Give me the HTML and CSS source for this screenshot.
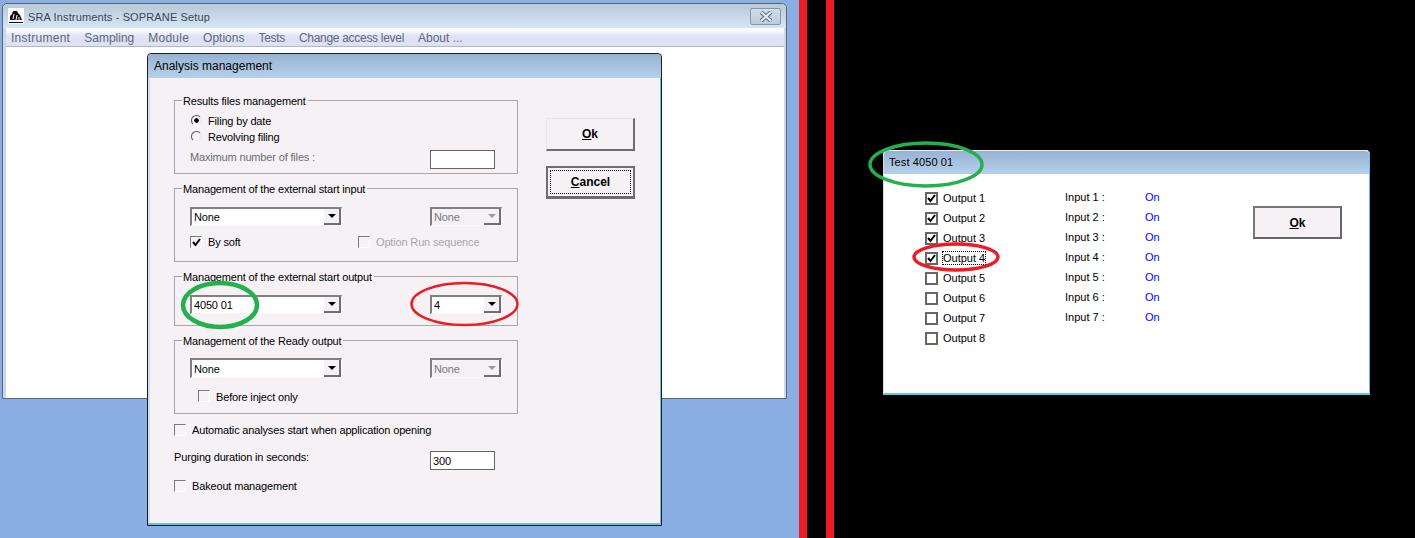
FILE: index.html
```html
<!DOCTYPE html>
<html lang="en">

<head>
    <meta charset="UTF-8">
    <meta name="viewport" content="width=device-width, initial-scale=1.0">
    <title>SOPRANE Setup</title>
    <link rel="stylesheet" href="styles.css">
</head>

<body>
    <div class="screen">
        <div class="left-pane">
            <!-- Main application window -->
            <div class="main-window">
                <div class="main-title">
                    <svg class="app-icon" width="16" height="16" viewBox="0 0 16 16">
                        <rect width="16" height="16" fill="#fff" />
                        <path d="M2 12 L2 8 L4 6 L5 3 L9 3 L10 5 L12 7 L14 12 Z" fill="#111" />
                        <path d="M5 11 L6 6 M8 12 L9 7 M11 12 L11 9" stroke="#fff" stroke-width="1" fill="none" />
                        <rect x="1" y="14" width="14" height="1" fill="#111" />
                    </svg>
                    <span class="main-title-text">SRA Instruments - SOPRANE Setup</span>
                    <div class="close-btn">
                        <svg width="14" height="11" viewBox="0 0 14 11">
                            <path d="M2 1 L12 10 M12 1 L2 10" stroke="#5d6a7a" stroke-width="4" fill="none" />
                            <path d="M2 1 L12 10 M12 1 L2 10" stroke="#e8eef4" stroke-width="2" fill="none" />
                        </svg>
                    </div>
                </div>
                <div class="menu-bar">
                    <span class="menu-wide">Instrument</span>
                    <span>Sampling</span>
                    <span class="menu-wide">Module</span>
                    <span>Options</span>
                    <span class="menu-tight">Tests</span>
                    <span class="menu-tight">Change access level</span>
                    <span>About ...</span>
                </div>
                <div class="main-content"></div>
            </div>

            <!-- Analysis management dialog -->
            <div class="dialog analysis-dialog">
                <div class="dialog-title">Analysis management</div>
                <div class="analysis-body">
                    <div class="analysis-form">
                        <fieldset class="group group-files">
                            <legend>Results files management</legend>
                            <div class="row-radio"><span class="radio radio-on"></span>Filing by date</div>
                            <div class="row-radio"><span class="radio"></span>Revolving filing</div>
                            <div class="row-max">
                                <span class="muted">Maximum number of files :</span>
                                <span class="text-box"></span>
                            </div>
                        </fieldset>

                        <fieldset class="group group-input">
                            <legend>Management of the external start input</legend>
                            <div class="row-combos">
                                <div class="combo combo-wide">
                                    <span class="combo-text">None</span>
                                    <span class="combo-btn"><i class="arrow"></i></span>
                                </div>
                                <div class="combo combo-small combo-off">
                                    <span class="combo-text">None</span>
                                    <span class="combo-btn"><i class="arrow"></i></span>
                                </div>
                            </div>
                            <div class="row-checks">
                                <label class="check-item check-item-soft">
                                    <span class="check">
                                        <svg width="9" height="9" viewBox="0 0 9 9"><path d="M1 4 L3.5 7 L8 1" stroke="#000" stroke-width="2" fill="none" /></svg>
                                    </span>By soft
                                </label>
                                <label class="check-item disabled"><span class="check"></span>Option Run sequence</label>
                            </div>
                        </fieldset>

                        <fieldset class="group group-output">
                            <legend>Management of the external start output</legend>
                            <div class="row-combos">
                                <div class="combo combo-wide">
                                    <span class="combo-text">4050 01</span>
                                    <span class="combo-btn"><i class="arrow"></i></span>
                                </div>
                                <div class="combo combo-small">
                                    <span class="combo-text">4</span>
                                    <span class="combo-btn"><i class="arrow"></i></span>
                                </div>
                            </div>
                        </fieldset>

                        <fieldset class="group group-ready">
                            <legend>Management of the Ready output</legend>
                            <div class="row-combos">
                                <div class="combo combo-wide">
                                    <span class="combo-text">None</span>
                                    <span class="combo-btn"><i class="arrow"></i></span>
                                </div>
                                <div class="combo combo-small combo-off">
                                    <span class="combo-text">None</span>
                                    <span class="combo-btn"><i class="arrow"></i></span>
                                </div>
                            </div>
                            <div class="row-inject">
                                <label class="check-item"><span class="check"></span>Before inject only</label>
                            </div>
                        </fieldset>

                        <label class="check-item row-auto"><span class="check"></span>Automatic analyses start when application opening</label>
                        <div class="row-purge">
                            <span class="purge-label">Purging duration in seconds:</span>
                            <span class="text-box">300</span>
                        </div>
                        <label class="check-item row-bake"><span class="check"></span>Bakeout management</label>
                    </div>

                    <div class="analysis-buttons">
                        <button class="win-btn"><u>O</u>k</button>
                        <button class="win-btn win-btn-focus"><span class="focus-box"><u>C</u>ancel</span></button>
                    </div>
                </div>
            </div>
        </div>

        <div class="stripe"></div>
        <div class="gap"></div>
        <div class="stripe"></div>

        <div class="right-pane">
            <!-- Test dialog -->
            <div class="dialog test-dialog">
                <div class="dialog-title test-title">Test 4050 01</div>
                <div class="test-body">
                    <div class="io-list">
                        <div class="io-row"><span class="check check-strong"><svg width="9" height="9" viewBox="0 0 9 9"><path d="M1 4 L3.5 7 L8 1" stroke="#000" stroke-width="2" fill="none" /></svg></span><span class="io-output">Output 1</span><span class="io-input">Input 1 :</span><span class="io-state">On</span></div>
                        <div class="io-row"><span class="check check-strong"><svg width="9" height="9" viewBox="0 0 9 9"><path d="M1 4 L3.5 7 L8 1" stroke="#000" stroke-width="2" fill="none" /></svg></span><span class="io-output">Output 2</span><span class="io-input">Input 2 :</span><span class="io-state">On</span></div>
                        <div class="io-row"><span class="check check-strong"><svg width="9" height="9" viewBox="0 0 9 9"><path d="M1 4 L3.5 7 L8 1" stroke="#000" stroke-width="2" fill="none" /></svg></span><span class="io-output">Output 3</span><span class="io-input">Input 3 :</span><span class="io-state">On</span></div>
                        <div class="io-row"><span class="check check-strong"><svg width="9" height="9" viewBox="0 0 9 9"><path d="M1 4 L3.5 7 L8 1" stroke="#000" stroke-width="2" fill="none" /></svg></span><span class="io-output"><span class="io-focus">Output 4</span></span><span class="io-input">Input 4 :</span><span class="io-state">On</span></div>
                        <div class="io-row"><span class="check check-strong"></span><span class="io-output">Output 5</span><span class="io-input">Input 5 :</span><span class="io-state">On</span></div>
                        <div class="io-row"><span class="check check-strong"></span><span class="io-output">Output 6</span><span class="io-input">Input 6 :</span><span class="io-state">On</span></div>
                        <div class="io-row"><span class="check check-strong"></span><span class="io-output">Output 7</span><span class="io-input">Input 7 :</span><span class="io-state">On</span></div>
                        <div class="io-row"><span class="check check-strong"></span><span class="io-output">Output 8</span></div>
                    </div>
                    <button class="win-btn win-btn-default"><u>O</u>k</button>
                </div>
            </div>
        </div>

        <!-- Hand drawn highlight ellipses -->
        <svg class="marks" width="1415" height="538" viewBox="0 0 1415 538">
            <ellipse class="mark-thick" cx="220" cy="305" rx="37" ry="22" stroke="#22b14c" />
            <ellipse class="mark-thin" cx="464.5" cy="304" rx="53" ry="21" stroke="#ed1c24" />
            <ellipse cx="926" cy="164.5" rx="56" ry="21.5" stroke="#22b14c" />
            <ellipse cx="956" cy="257" rx="42" ry="13" stroke="#ed1c24" />
        </svg>
    </div>
</body>

</html>
```

FILE: styles.css
```css
/* Reset Styles */
* {
    margin: 0;
    padding: 0;
    box-sizing: border-box;
}

body {
    font-family: "Liberation Sans", Arial, sans-serif;
    font-size: 11px;
    line-height: 13px;
    color: #000;
    background-color: #000;
    overflow: hidden;
}

.screen {
    position: relative;
    display: flex;
    width: 1415px;
    height: 538px;
}

.left-pane {
    position: relative;
    width: 799px;
    background-color: #8aaee3;
}

.stripe {
    width: 8px;
    background-color: #ed1c24;
}

.gap {
    width: 19px;
    background-color: #000;
}

.right-pane {
    position: relative;
    flex: 1;
    background-color: #000;
}

/* Main Window */
.main-window {
    position: absolute;
    left: 2px;
    top: 3px;
    width: 785px;
    height: 396px;
    display: flex;
    flex-direction: column;
    background: #c9d9e8;
    border: 1px solid #5c6670;
    border-radius: 5px 5px 0 0;
    padding: 0 2px 0 3px;
}

.main-title {
    display: flex;
    align-items: center;
    height: 24px;
    flex-shrink: 0;
    margin: 0 -2px 0 -3px;
    padding: 0 5px 0 5px;
    background: linear-gradient(#b9c8d6, #d4e6f6);
    border-radius: 5px 5px 0 0;
}

.app-icon {
    flex-shrink: 0;
}

.main-title-text {
    margin-left: 4px;
    padding-top: 2px;
    color: #3a4654;
    font-size: 11px;
    letter-spacing: 0.13px;
}

.close-btn {
    display: flex;
    align-items: center;
    justify-content: center;
    width: 31px;
    height: 17px;
    margin-left: auto;
    background: linear-gradient(#d0deea, #bccbdb);
    border: 1px solid #8695ad;
    border-radius: 2px;
}

.menu-bar {
    display: flex;
    gap: 14px;
    height: 19px;
    flex-shrink: 0;
    align-items: center;
    padding: 2px 0 0 5px;
    color: #5d6975;
    font-size: 12px;
    background: linear-gradient(#fdfeff 0, #f4f6fc 20%, #dfe3f5 45%, #dde2f3 100%);
    border-bottom: 1px solid #aeb8cc;
}

.menu-wide {
    letter-spacing: 0.25px;
}

.menu-tight {
    letter-spacing: -0.3px;
}

.main-content {
    flex: 1;
    background-color: #fff;
}

/* Dialogs */
.dialog {
    position: absolute;
    display: flex;
    flex-direction: column;
    background-color: #f5f1f5;
    border: 1px solid #1c1c1c;
    border-radius: 4px 4px 0 0;
}

.dialog-title {
    height: 24px;
    flex-shrink: 0;
    padding: 6px 0 0 6px;
    background: linear-gradient(#97b3d2, #b5d0ec);
    font-size: 12px;
    border-radius: 4px 4px 0 0;
}

.analysis-dialog {
    left: 147px;
    top: 53px;
    width: 515px;
    height: 473px;
    box-shadow: inset -1px -2px 0 #5fc6e0, inset 2px 0 0 #cfe0f0;
}

.analysis-body {
    display: flex;
    padding: 15px 0 0 26px;
}

.analysis-form {
    width: 344px;
    letter-spacing: -0.16px;
}

.analysis-buttons {
    display: flex;
    flex-direction: column;
    gap: 15px;
    margin: 25px 0 0 28px;
}

/* Group Boxes */
.group {
    border: 1px solid #a7a7a7;
    margin-bottom: 7px;
    padding: 0 0 0 15px;
}

.group legend {
    margin-left: -8px;
    padding: 2px 2px 0 1px;
}

.group-files {
    padding-top: 5px;
    padding-bottom: 4px;
}

.group-input {
    padding-top: 11px;
    padding-bottom: 11px;
}

.group-output {
    padding-top: 11px;
    padding-bottom: 11px;
}

.group-ready {
    padding-top: 10px;
    padding-bottom: 8px;
}

.group-ready .combo {
    height: 20px;
}

.group-ready .combo-text {
    padding-top: 3px;
}

.row-radio {
    display: flex;
    align-items: center;
    height: 16px;
    padding-left: 1px;
}

.row-radio .radio {
    margin-bottom: 2px;
}

.row-max {
    display: flex;
    justify-content: space-between;
    margin: 5px 22px 0 0;
}

.muted {
    padding-top: 1px;
    color: #6d6d6d;
}

.row-combos {
    display: flex;
    gap: 88px;
}

.row-checks {
    display: flex;
    margin-top: 8px;
}

.check-item-soft {
    width: 168px;
}

.row-inject {
    margin-top: 11px;
    padding-left: 8px;
}

.row-inject .check {
    margin-bottom: 2px;
}

.row-auto {
    margin-top: 8px;
}

.row-purge {
    display: flex;
    justify-content: space-between;
    width: 321px;
    margin-top: 13px;
}

.row-bake {
    margin-top: 8px;
}

/* Form Controls */
.radio {
    display: inline-block;
    width: 11px;
    height: 11px;
    margin-right: 6px;
    border-radius: 50%;
    background-color: #f5f1f5;
    border: 1px solid;
    border-color: #555 #e8e8e8 #fff #555;
}

.radio-on {
    background: radial-gradient(circle, #000 0, #000 2px, #f5f1f5 2.5px);
}

.text-box {
    display: block;
    width: 65px;
    height: 19px;
    padding: 3px 2px 0;
    background-color: #fff;
    border: 1px solid #666;
}

.combo {
    display: flex;
    height: 19px;
    background-color: #fff;
    border: 2px solid;
    border-color: #808080 #f8f8f8 #f8f8f8 #808080;
    border-width: 2px 1px 1px 2px;
}

.combo-wide {
    width: 152px;
}

.combo-small {
    width: 72px;
}

.combo-text {
    flex: 1;
    padding: 2px 0 0 2px;
}

.combo-btn {
    display: flex;
    align-items: center;
    justify-content: center;
    width: 17px;
    background-color: #f5f1f5;
    border-right: 2px solid #6e6e6e;
    border-bottom: 2px solid #6e6e6e;
}

.arrow {
    border-left: 4px solid transparent;
    border-right: 4px solid transparent;
    border-top: 4px solid #000;
}

.combo-off {
    background-color: #f5f1f5;
    color: #777;
}

.combo-off .arrow {
    border-top-color: #999;
}

.check-item {
    display: flex;
    align-items: center;
    height: 16px;
}

.check {
    display: flex;
    align-items: center;
    justify-content: center;
    width: 12px;
    height: 12px;
    flex-shrink: 0;
    margin-right: 6px;
    border: 1px solid;
    border-color: #7a7a7a #fff #fff #7a7a7a;
}

.disabled {
    color: #a8a8a8;
}

.check-strong {
    width: 13px;
    height: 13px;
    background-color: #fff;
    border: 2px solid #666;
    margin-right: 5px;
}

/* Buttons */
.win-btn {
    display: block;
    width: 89px;
    height: 33px;
    font-family: inherit;
    font-size: 12px;
    font-weight: bold;
    letter-spacing: 0;
    background-color: #f5f1f5;
    border: 1px solid;
    border-color: #e6e6e6 #6e6e6e #6e6e6e #e6e6e6;
    border-width: 1px 2px 2px 1px;
}

.win-btn-focus {
    padding: 2px;
    border: 2px solid #6e6e6e;
    border-bottom-width: 3px;
}

.focus-box {
    display: flex;
    align-items: center;
    justify-content: center;
    height: 100%;
    border: 1px dotted #000;
}

.win-btn-default {
    flex-shrink: 0;
    margin-top: 32px;
    border: 2px solid #6e6e6e;
    border-color: #777 #666 #666 #777;
}

/* Test Dialog */
.test-dialog {
    left: 49px;
    top: 150px;
    width: 487px;
    height: 245px;
    background-color: #fff;
    border-color: #e9eef5 #62c6e4 #62c6e4 #cfe0f0;
    border-width: 1px 1px 2px 1px;
}

.test-title {
    height: 23px;
    padding: 5px 0 0 5px;
    font-size: 11px;
    letter-spacing: 0.1px;
}

.test-body {
    display: flex;
    padding-left: 41px;
}

.io-list {
    width: 328px;
    padding-top: 14px;
}

.io-row {
    display: flex;
    align-items: center;
    height: 20px;
}

.io-output {
    width: 122px;
}

.io-focus {
    outline: 1px dotted #000;
}

.io-input {
    width: 80px;
    margin-top: -2px;
}

.io-state {
    margin-top: -2px;
    color: #0000ff;
}

/* Highlight Marks */
.marks {
    position: absolute;
    left: 0;
    top: 0;
    pointer-events: none;
}

.marks ellipse {
    fill: none;
    stroke-width: 3.5;
}

.marks .mark-thick {
    stroke-width: 4.5;
}

.marks .mark-thin {
    stroke-width: 2.5;
}
```
